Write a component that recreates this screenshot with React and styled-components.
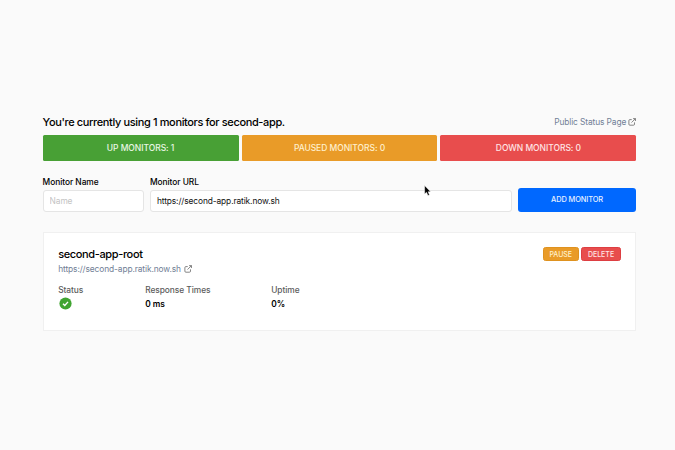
import React from 'react';
import styled, { createGlobalStyle } from 'styled-components';

const GlobalStyle = createGlobalStyle`
  * { box-sizing: border-box; }
  body {
    margin: 0;
    background: #fafafa;
    color: #000;
    font-family: Inter, "Liberation Sans", sans-serif;
  }
`;

const Page = styled.main`
  position: relative;
  width: 675px;
  height: 450px;
  padding: 114px 38.6px 0 42.6px;
  overflow: hidden;
`;

const Header = styled.header`
  display: flex;
  justify-content: space-between;
  align-items: center;
  height: 16px;
`;

const Title = styled.h1`
  margin: 0;
  font-size: 11px;
  line-height: 16px;
  font-weight: 500;
  letter-spacing: -0.37px;
  white-space: nowrap;
`;

const Link = styled.a`
  display: flex;
  align-items: center;
  gap: ${(p) => p.$gap || '3px'};
  color: #718096;
  font-size: 8.4px;
  line-height: 12px;
  letter-spacing: -0.11px;
  white-space: nowrap;
`;

const Stats = styled.section`
  display: grid;
  grid-template-columns: repeat(3, 1fr);
  gap: 3px;
  margin-top: 5px;
`;

const Stat = styled.div`
  display: flex;
  align-items: center;
  justify-content: center;
  height: 26px;
  border-radius: 1.5px;
  background: ${(p) => p.$color};
  color: ${(p) => p.$text};
  font-size: 8.5px;
  font-weight: 500;
  letter-spacing: -0.05px;
`;

const Form = styled.form`
  display: grid;
  grid-template-columns: 101.5px 362px 118.6px;
  column-gap: 5.8px;
  align-items: end;
  margin-top: 15px;
`;

const Field = styled.label`
  display: flex;
  flex-direction: column;
  font-size: 8.4px;
  line-height: 13px;
  font-weight: 500;
  letter-spacing: -0.05px;
`;

const Input = styled.input`
  width: 100%;
  height: 22px;
  margin-top: 0.5px;
  padding: 0 6px;
  border: 1px solid #e5e5e5;
  border-radius: 3px;
  outline: none;
  background: #fff;
  color: #111;
  font: 400 8.4px Inter, sans-serif;
  letter-spacing: -0.11px;
  &::placeholder { color: #c4c4c4; opacity: 1; }
`;

const AddButton = styled.button`
  height: 24px;
  padding: 0;
  border: 0;
  border-radius: 3px;
  background: #0068ff;
  color: #e6f0ff;
  font: 500 7.4px Inter, sans-serif;
  letter-spacing: -0.1px;
`;

const Card = styled.article`
  height: 99px;
  margin-top: 20px;
  padding: 13px 14.6px;
  border: 1px solid #f0f0f0;
  background: #fff;
`;

const CardHeader = styled.div`
  display: flex;
  justify-content: space-between;
  height: 16px;
`;

const Actions = styled.div`
  display: flex;
  gap: 2.4px;
  padding-top: 1.4px;
`;

const SmallButton = styled.button`
  width: ${(p) => p.$width};
  height: 14.5px;
  padding: 0;
  border: 1px solid ${(p) => p.$border};
  border-radius: 2.5px;
  background: ${(p) => p.$color};
  color: ${(p) => p.$text};
  font: 500 7px Inter, sans-serif;
`;

const Metrics = styled.dl`
  display: grid;
  grid-template-columns: 87px 126px 60px;
  margin: 8px 0 0;
`;

const Metric = styled.div`
  font-size: 8.4px;
  line-height: 14px;
  letter-spacing: -0.06px;
`;

const Term = styled.dt`
  color: #5c5c5c;
  font-weight: 500;
`;

const Value = styled.dd`
  margin: 0;
  height: 14px;
  font-weight: 600;
`;

const CheckSvg = styled.svg`
  display: block;
  margin: 0.5px 0 0 0.5px;
`;

const CardLink = styled.div`
  display: flex;
  margin-top: 1px;
`;

const Cursor = styled.svg`
  position: absolute;
  left: 424px;
  top: 185px;
`;

const ExternalIcon = () => (
  <svg width="8" height="8" viewBox="0 0 9 9" fill="none" stroke="#666" strokeWidth="0.9">
    <path d="M4.2 1.8H2.1Q1 1.8 1 2.9V7Q1 8.1 2.1 8.1H6.2Q7.3 8.1 7.3 7V4.9M5.7 0.7H8.4V3.4M8.4 0.7L4 5.1" />
  </svg>
);

const CheckIcon = () => (
  <CheckSvg width="13" height="13" viewBox="0 0 13 13">
    <circle cx="6.5" cy="6.5" r="6.1" fill="#40a431" />
    <path d="M4 6.7L5.8 8.5L9 4.9" fill="none" stroke="#fff" strokeWidth="1.4" />
  </CheckSvg>
);

export default function App() {
  return (
    <>
      <GlobalStyle />
      <Page>
        <Header>
          <Title>You're currently using 1 monitors for second-app.</Title>
          <Link $gap="2.2px">Public Status Page <ExternalIcon /></Link>
        </Header>
        <Stats>
          <Stat $color="#48a035" $text="#e8f7e4">UP MONITORS: 1</Stat>
          <Stat $color="#e99b28" $text="#fff0cd">PAUSED MONITORS: 0</Stat>
          <Stat $color="#e84d4d" $text="#ffe5e5">DOWN MONITORS: 0</Stat>
        </Stats>
        <Form>
          <Field>Monitor Name<Input placeholder="Name" /></Field>
          <Field>Monitor URL<Input defaultValue="https://second-app.ratik.now.sh" /></Field>
          <AddButton type="button">ADD MONITOR</AddButton>
        </Form>
        <Card>
          <CardHeader>
            <Title as="h2">second-app-root</Title>
            <Actions>
              <SmallButton $width="36.2px" $color="#e99b28" $border="#df921f" $text="#fff0cd">PAUSE</SmallButton>
              <SmallButton $width="39.6px" $color="#e84d4d" $border="#dd3e42" $text="#ffe5e5">DELETE</SmallButton>
            </Actions>
          </CardHeader>
          <CardLink><Link>https://second-app.ratik.now.sh <ExternalIcon /></Link></CardLink>
          <Metrics>
            <Metric><Term>Status</Term><Value><CheckIcon /></Value></Metric>
            <Metric><Term>Response Times</Term><Value>0 ms</Value></Metric>
            <Metric><Term>Uptime</Term><Value>0%</Value></Metric>
          </Metrics>
        </Card>
        <Cursor width="8" height="12" viewBox="0 0 8 12">
          <path d="M0.6 0.6V9L2.5 7.3L3.9 10.6L5.5 9.9L4.1 6.8H6.6Z" fill="#000" stroke="#fff" strokeWidth="0.5" />
        </Cursor>
      </Page>
    </>
  );
}
